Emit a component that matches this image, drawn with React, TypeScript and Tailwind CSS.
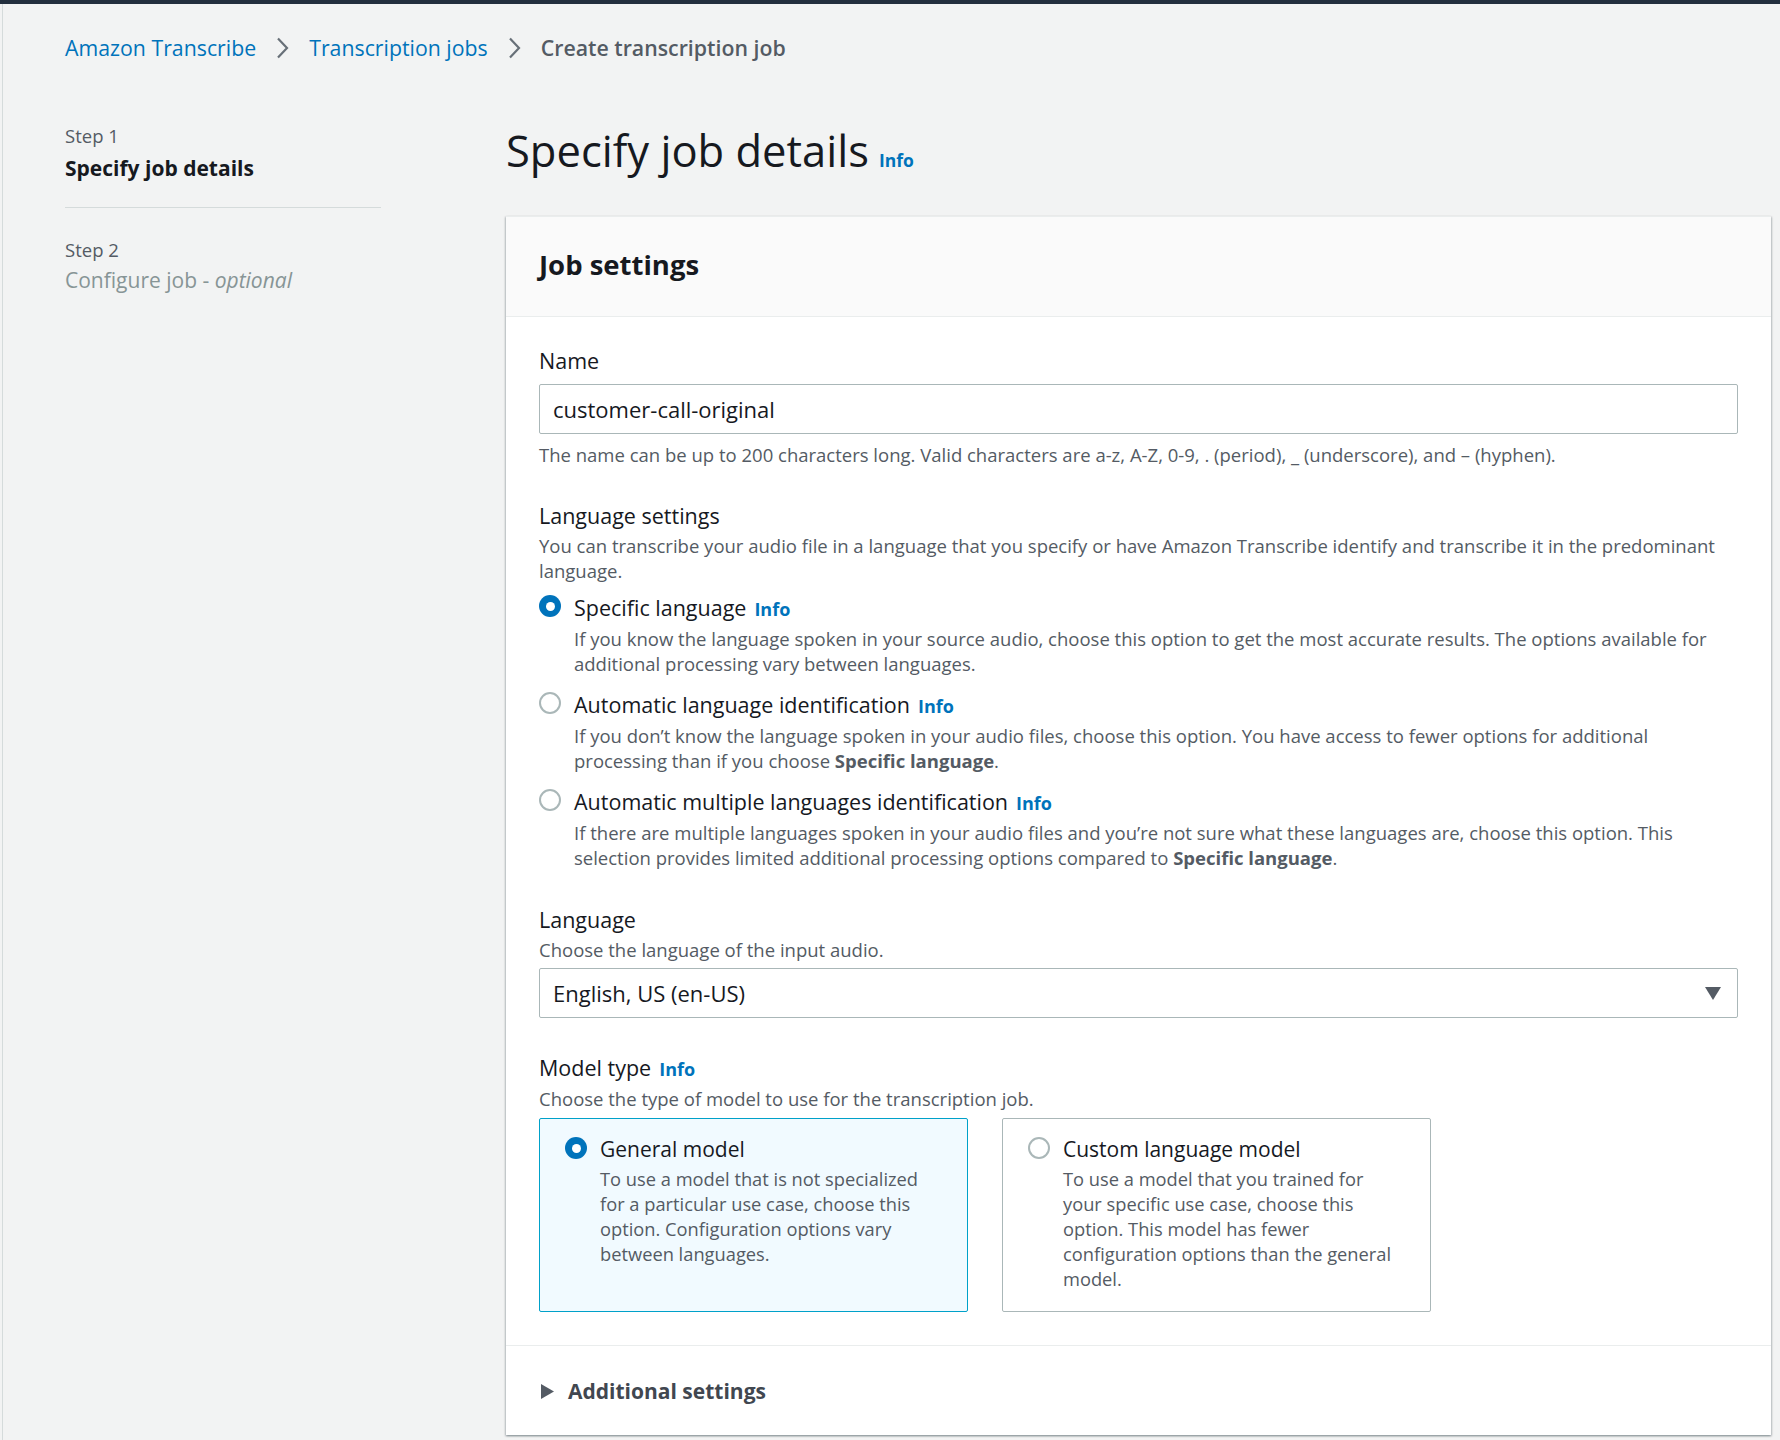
function InfoLink({ className = '' }: { className?: string }) {
  return <span className={`font-bold text-[#0073bb] ${className}`}>Info</span>
}

function Radio({ checked = false }: { checked?: boolean }) {
  if (checked) {
    return (
      <span className="flex h-[22px] w-[22px] shrink-0 items-center justify-center rounded-full bg-[#0073bb]">
        <span className="h-[9px] w-[9px] rounded-full bg-white" />
      </span>
    )
  }
  return <span className="h-[22px] w-[22px] shrink-0 rounded-full border-2 border-[#aab7b8] bg-white" />
}

function Chevron() {
  return (
    <svg className="mx-[20px] shrink-0" width="13" height="22" viewBox="0 0 13 22" fill="none">
      <path d="M2 1.5 11 11 2 20.5" stroke="#687078" strokeWidth="2.2" strokeLinejoin="miter" />
    </svg>
  )
}

interface RadioOptionProps {
  label: string
  checked?: boolean
  children: React.ReactNode
}

function RadioOption({ label, checked, children }: RadioOptionProps) {
  return (
    <div className="flex gap-[13px]">
      <div className="flex h-[24px] items-center">
        <Radio checked={checked} />
      </div>
      <div>
        <div className="text-[21.5px] leading-[28px] text-[#16191f]">
          {label}
          <InfoLink className="ml-[8px] text-[18px]" />
        </div>
        <div className="mt-[3px] text-[18.5px] leading-[25px] text-[#545b64]">{children}</div>
      </div>
    </div>
  )
}

function Tile({ label, checked, children }: RadioOptionProps) {
  return (
    <div
      className={
        checked
          ? 'flex w-[429px] gap-[13px] rounded-[2px] border border-[#00a1c9] bg-[#f1faff] pb-[20px] pl-[25px] pr-[16px] pt-[16px]'
          : 'flex w-[429px] gap-[13px] rounded-[2px] border border-[#aab7b8] bg-white pb-[20px] pl-[25px] pr-[16px] pt-[16px]'
      }
    >
      <div className="flex h-[26px] items-center">
        <Radio checked={checked} />
      </div>
      <div>
        <div className="text-[21px] leading-[28px] text-[#16191f]">{label}</div>
        <div className="mt-[3px] text-[18.3px] leading-[25px] text-[#545b64]">{children}</div>
      </div>
    </div>
  )
}

export default function App() {
  return (
    <div className="flex min-h-screen flex-col bg-[#f2f3f3] font-['Open_Sans','Noto_Sans',sans-serif] text-[#16191f]">
      <div className="h-[4px] bg-[#232f3e]" />
      <div className="ml-[2px] flex-1 border-l border-[#d5dbdb] pb-[8px]">
        {/* breadcrumbs */}
        <nav className="flex h-[88px] items-center pl-[62px] text-[21.3px] leading-[28px]">
          <span className="text-[#0073bb]">Amazon Transcribe</span>
          <Chevron />
          <span className="text-[#0073bb]">Transcription jobs</span>
          <Chevron />
          <span className="font-semibold text-[#545b64]">Create transcription job</span>
        </nav>

        <div className="flex pl-[62px] pr-[9px]">
          {/* wizard steps */}
          <aside className="w-[316px] shrink-0 pt-[32px]">
            <div className="text-[18.5px] leading-[24px] text-[#545b64]">Step 1</div>
            <div className="mt-[7px] text-[21px] font-bold leading-[26px] text-[#16191f]">Specify job details</div>
            <div className="mt-[26px] border-t border-[#d5dbdb]" />
            <div className="mt-[30px] text-[18.5px] leading-[24px] text-[#545b64]">Step 2</div>
            <div className="mt-[5px] text-[21px] leading-[26px] text-[#879596]">
              Configure job - <i>optional</i>
            </div>
          </aside>

          <main className="ml-[125px] min-w-0 flex-1">
            <div className="flex items-baseline gap-[10px] pt-[34px]">
              <h1 className="text-[43.5px] font-normal leading-[50px] text-[#16191f]">Specify job details</h1>
              <InfoLink className="text-[17.5px]" />
            </div>

            <section className="mt-[40px] border-t border-[#eaeded] bg-white shadow-[0_1px_2px_0_rgba(0,28,36,0.3),1px_1px_2px_0_rgba(0,28,36,0.15),-1px_1px_2px_0_rgba(0,28,36,0.15)]">
              <header className="border-b border-[#eaeded] bg-[#fafafa] px-[33px] pb-[35px] pt-[32px]">
                <h2 className="text-[27.5px] font-bold leading-[32px]">Job settings</h2>
              </header>

              <div className="px-[33px] pb-[33px] pt-[31px]">
                <div className="text-[21.5px] leading-[25px]">Name</div>
                <div className="mt-[11px] flex h-[50px] items-center rounded-[2px] border border-[#aab7b8] bg-white pl-[13px] text-[22px]">
                  customer-call-original
                </div>
                <div className="mt-[8px] text-[18.5px] leading-[25px] text-[#545b64]">
                  The name can be up to 200 characters long. Valid characters are a-z, A-Z, 0-9, . (period), _ (underscore), and – (hyphen).
                </div>

                <div className="mt-[36px] text-[21.5px] leading-[25px]">Language settings</div>
                <div className="mt-[5px] text-[18.5px] leading-[25px] text-[#545b64]">
                  You can transcribe your audio file in a language that you specify or have Amazon Transcribe identify and transcribe it in the predominant
                  <br />
                  language.
                </div>

                <div className="mt-[11px] flex flex-col gap-[15px]">
                  <RadioOption label="Specific language" checked>
                    If you know the language spoken in your source audio, choose this option to get the most accurate results. The options available for
                    <br />
                    additional processing vary between languages.
                  </RadioOption>
                  <RadioOption label="Automatic language identification">
                    If you don’t know the language spoken in your audio files, choose this option. You have access to fewer options for additional
                    <br />
                    processing than if you choose <b>Specific language</b>.
                  </RadioOption>
                  <RadioOption label="Automatic multiple languages identification">
                    If there are multiple languages spoken in your audio files and you’re not sure what these languages are, choose this option. This
                    <br />
                    selection provides limited additional processing options compared to <b>Specific language</b>.
                  </RadioOption>
                </div>

                <div className="mt-[37px] text-[21.5px] leading-[25px]">Language</div>
                <div className="mt-[5px] text-[18.5px] leading-[25px] text-[#545b64]">Choose the language of the input audio.</div>
                <div className="mt-[6px] flex h-[50px] items-center justify-between rounded-[2px] border border-[#aab7b8] bg-white pl-[13px] pr-[16px] text-[22px]">
                  <span>English, US (en-US)</span>
                  <svg width="16" height="13" viewBox="0 0 16 13">
                    <path d="M0 0h16L8 13z" fill="#545b64" />
                  </svg>
                </div>

                <div className="mt-[37px] text-[21.5px] leading-[25px]">
                  Model type
                  <InfoLink className="ml-[8px] text-[18px]" />
                </div>
                <div className="mt-[4px] text-[18.5px] leading-[25px] text-[#545b64]">Choose the type of model to use for the transcription job.</div>
                <div className="mt-[7px] flex gap-[34px]">
                  <Tile label="General model" checked>
                    To use a model that is not specialized
                    <br />
                    for a particular use case, choose this
                    <br />
                    option. Configuration options vary
                    <br />
                    between languages.
                  </Tile>
                  <Tile label="Custom language model">
                    To use a model that you trained for
                    <br />
                    your specific use case, choose this
                    <br />
                    option. This model has fewer
                    <br />
                    configuration options than the general
                    <br />
                    model.
                  </Tile>
                </div>
              </div>

              <div className="flex items-center gap-[14px] border-t border-[#eaeded] px-[35px] pb-[30px] pt-[31px]">
                <svg width="13" height="15" viewBox="0 0 13 15">
                  <path d="M0 0 13 7.5 0 15z" fill="#545b64" />
                </svg>
                <span className="text-[21px] font-bold leading-[28px] text-[#414750]">Additional settings</span>
              </div>
            </section>
          </main>
        </div>
      </div>
    </div>
  )
}
